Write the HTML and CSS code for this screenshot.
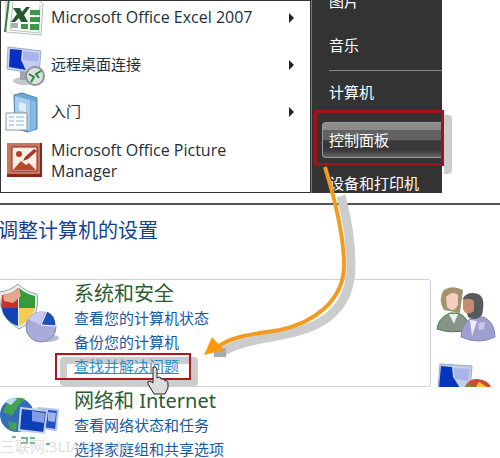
FILE: index.html
```
<!DOCTYPE html>
<html lang="zh-CN">
<head>
    <meta charset="UTF-8">
    <meta name="viewport" content="width=device-width, initial-scale=1.0">
    <title>控制面板</title>
    <link rel="stylesheet" href="styles.css">
</head>
<body>
    <div class="start-menu">
        <ul class="programs">
            <li>
                <a href="#" class="program">
                    <svg class="icon" width="44" height="46" viewBox="0 0 44 46">
                        <path d="M5 5 L37 5 L42 9 L40 40 L5 37Z" fill="#fff" stroke="#b4b8bd" />
                        <path d="M8 4 L4 37" fill="none" stroke="#2f7d39" stroke-width="2" />
                        <path d="M12 7 L9 35 L38 38 L39 10" fill="none" stroke="#a9c9ac" />
                        <path d="M29 15h10v5H29zM29 22h10v5H29zM29 29h9v6H29zM20 29h7v5h-7z" fill="#3f9648" />
                        <path d="M10 28h7v5h-7z" fill="#a5b2aa" />
                        <path d="M12 13h7l2 4 4-5h4l-6 8 4 7h-7l-2-4-4 4h-4l6-8z" fill="#25592f" />
                    </svg>
                    <span class="latin">Microsoft Office Excel 2007</span>
                    <i class="arrow"></i>
                </a>
            </li>
            <li>
                <a href="#" class="program">
                    <svg class="icon" width="44" height="46" viewBox="0 0 44 46">
                        <ellipse cx="23" cy="39" rx="11" ry="4" fill="#c4c8cb" />
                        <path d="M19 28h8v10h-8z" fill="#9da5ad" />
                        <path d="M7 5 L40 9 L38 32 L6 27Z" fill="#c9d6ec" stroke="#9eabc6" />
                        <path d="M9 7l12 1-1 10 5 10-17-3z" fill="#092fc0" />
                        <path d="M22 9l16 2-1 9-15-2z" fill="#a9b4ec" />
                        <path d="M22 18l15 2-1 8-12-1z" fill="#c3cdf2" />
                        <circle cx="34" cy="34" r="9" fill="#dfe1e1" stroke="#8f9396" stroke-width="2" />
                        <path d="M28 32l5 3-3 5M40 29l-5 3 3 4" fill="none" stroke="#28883b" stroke-width="2" />
                    </svg>
                    <span>远程桌面连接</span>
                    <i class="arrow"></i>
                </a>
            </li>
            <li>
                <a href="#" class="program">
                    <svg class="icon" width="44" height="46" viewBox="0 0 44 46">
                        <path d="M13 6l8-2 15 5v31l-10 3-12-4z" fill="#6da9d6" stroke="#4a83ac" />
                        <path d="M14 7l15 4v31l-15-4z" fill="#a9cdea" />
                        <path d="M30 11l5 2v26l-5 3z" fill="#87bbe0" />
                        <path d="M18 13l7 2v8l-7-2z" fill="#e0effa" />
                        <path d="M5 24h21v17H5z" fill="#f8fbfd" stroke="#8a9aa5" />
                        <path d="M8 28h5M8 32h5M8 36h5M15 28h8M15 32h8M15 36h8" stroke="#92b4d5" />
                    </svg>
                    <span>入门</span>
                    <i class="arrow"></i>
                </a>
            </li>
            <li>
                <a href="#" class="program">
                    <svg class="icon" width="44" height="46" viewBox="0 0 44 46">
                        <path d="M6 5h35v34H6z" fill="#8c2519" />
                        <path d="M6 5h33v31H6z" fill="#c8775f" />
                        <path d="M11 9h25v24H11z" fill="#fcede5" stroke="#8c2519" />
                        <circle cx="18" cy="16" r="3" fill="#ae3f24" />
                        <path d="M24 19l9-8 3 2-9 8-5 2z" fill="#a63821" />
                        <path d="M12 32l8-9 5 4 3-2 7 7z" fill="#b9472b" />
                    </svg>
                    <span class="latin">Microsoft Office Picture Manager</span>
                </a>
            </li>
        </ul>
        <div class="places">
            <a href="#" class="place">图片</a>
            <a href="#" class="place">音乐</a>
            <hr>
            <a href="#" class="place">计算机</a>
            <a href="#" class="place active">控制面板</a>
            <a href="#" class="place">设备和打印机</a>
        </div>
    </div>

    <div class="panel">
        <h1>调整计算机的设置</h1>
        <div class="columns">
            <div class="categories">
                <div class="category boxed">
                    <svg class="category-icon" width="64" height="66" viewBox="0 0 64 66">
                        <path d="M-1 10Q10 9 18 2Q26 10 37 12Q41 36 19 47Q-1 36-1 10Z" fill="#e8ecea" stroke="#95a29f" />
                        <path d="M2 13Q12 12 18 6V26H1Z" fill="#c9302a" />
                        <path d="M19 6Q26 12 35 14V26H19Z" fill="#359b3b" />
                        <path d="M2 26H18V44Q3 38 2 26Z" fill="#1144b5" />
                        <path d="M19 26H35Q32 38 19 44Z" fill="#f6cb55" />
                        <path d="M3 13Q13 11 19 6L21 14L13 21L4 19Z" fill="#e5a78e" />
                        <ellipse cx="46" cy="56" rx="13" ry="4" fill="#bbc0c8" />
                        <circle cx="41" cy="45" r="15" fill="#a9acd9" stroke="#7d89b8" />
                        <path d="M41 43L47 29Q56 33 56 44Z" fill="#1e51b9" stroke="#fff" />
                        <path d="M40 43L28 37Q34 29 45 29Z" fill="#c8caf0" />
                    </svg>
                    <div class="category-text">
                        <h2>系统和安全</h2>
                        <a href="#">查看您的计算机状态</a>
                        <a href="#">备份您的计算机</a>
                        <a href="#" class="marked">查找并解决问题</a>
                    </div>
                </div>
                <div class="category">
                    <svg class="category-icon" width="64" height="64" viewBox="0 0 64 64">
                        <circle cx="17" cy="26" r="17" fill="#326db6" />
                        <path d="M7 14q9-8 18-4l-7 7-6 10-9-4zM8 32l9 2-1 8-6-2z" fill="#43a153" />
                        <path d="M5 13q5-6 12-3l-6 6z" fill="#b9dcf0" />
                        <path d="M38 19l20 2-2 20-20-3z" fill="#1e53c3" stroke="#b9c6e2" stroke-width="2" />
                        <path d="M48 23l8 1-1 9-7-1z" fill="#9fb2ea" />
                        <path d="M21 19l26 3-3 22-25-3z" fill="#0b3fb7" stroke="#c3cde7" stroke-width="2" />
                        <path d="M32 22l13 2-1 10-12-2z" fill="#839ce5" />
                        <path d="M12 48h4M21 49h6v5h-6M30 49h5M30 54h5M46 55h4" fill="none" stroke="#71b489" stroke-width="2" />
                    </svg>
                    <div class="category-text">
                        <h2>网络和 Internet</h2>
                        <a href="#">查看网络状态和任务</a>
                        <a href="#">选择家庭组和共享选项</a>
                    </div>
                </div>
            </div>
            <div class="side-icons">
                <svg width="64" height="60" viewBox="0 0 64 60">
                    <path d="M1 43Q2 32 14 27H22Q33 31 33 44Q15 48 1 43Z" fill="#889389" stroke="#378345" />
                    <path d="M8 24Q2 15 7 5Q15-2 27 4L24 27Z" fill="#a3926c" />
                    <path d="M10 11Q17 4 22 9V19Q17 28 11 21Z" fill="#f3cfc0" />
                    <path d="M13 28l5 10 4-10z" fill="#eee" />
                    <path d="M25 51Q25 36 38 31H48Q59 37 59 51Q43 59 25 51Z" fill="#9d9fd0" stroke="#8585b3" />
                    <path d="M27 12Q32 5 42 8Q50 11 46 29Q40 36 32 31Z" fill="#555a5c" />
                    <path d="M27 14Q33 11 38 15L38 25Q30 31 27 23Z" fill="#c58d70" />
                    <path d="M34 34l2 16 5-15z" fill="#eef" />
                    <path d="M42 37l7-1-1 7-5 1z" fill="#c3c8ee" />
                </svg>
                <svg width="64" height="24" viewBox="0 0 64 24">
                    <path d="M4 1l32 2-2 23H2z" fill="#c4cfe6" stroke="#9ba8c4" />
                    <path d="M5 3l11 1 1 10 7 11H3z" fill="#0534bd" />
                    <path d="M18 5l16 1-2 12-13-2z" fill="#a9b4ec" />
                    <path d="M29 24Q33 15 42 16Q52 17 55 24Z" fill="#cf4b32" />
                    <path d="M40 24l3-5 8 5z" fill="#ecc345" />
                    <path d="M30 24l2-3 7 3z" fill="#4c9a51" />
                </svg>
            </div>
        </div>
    </div>

    <svg class="pointer-arrow" width="170" height="210" viewBox="0 0 170 210">
        <path d="M141 36C148 62 151 82 151 105C151 155 115 169 82 175C50 181 32 184 20 194" fill="none" stroke="#ccc" stroke-width="9" />
        <path d="M14 188h12v9H14z" fill="#aaa" />
        <path d="M125 7C136 43 144 78 144 105C144 142 112 163 80 170C52 174 28 177 17 188" fill="none" stroke="#f39b1f" stroke-width="4" />
        <path d="M4 195L12 177L24 190Z" fill="#ff970f" />
    </svg>

    <svg class="hand" width="22" height="30" viewBox="0 0 22 30">
        <path d="M6 1q3-1 4 2v9l2-1q2 0 2 2 4-1 4 2 3-1 3 3v4l-3 6H7L1 18q-1-3 2-3l3 2z" fill="#ddd" stroke="#222" />
    </svg>
    <div class="watermark">三联网.3LIAN.COM</div>
</body>
</html>
```

FILE: styles.css
```
* {
    box-sizing: border-box;
}

body {
    margin: 0;
    height: 100vh;
    overflow: hidden;
    position: relative;
    background-color: #fff;
    font-family: "Noto Sans", "Noto Sans CJK SC", sans-serif;
    font-size: 15px;
}

a {
    color: inherit;
    text-decoration: none;
}

/* Start menu */
.start-menu {
    display: flex;
    height: 193px;
    margin-right: 58px;
    background-color: #333;
}

.programs {
    flex: 1;
    margin: 1px 0 1px 1px;
    padding: 0;
    list-style: none;
    overflow: hidden;
    background-color: #fff;
    color: #1c2f3c;
}

.program {
    display: flex;
    align-items: center;
    height: 47px;
    padding-right: 16px;
    line-height: 21px;
}

.programs li:first-child {
    margin-top: -7px;
}

.programs li:last-child {
    padding-top: 2px;
}

.program span {
    flex: 1;
    max-width: 210px;
}

.program .latin {
    font-family: "Open Sans", "Noto Sans", sans-serif;
    font-size: 16px;
}

.icon {
    margin-right: 6px;
    flex-shrink: 0;
}

.arrow {
    margin-left: auto;
    border: 5px solid transparent;
    border-left: 5px solid #222;
    border-right: 0;
}

.places {
    width: 131px;
    margin-left: 1px;
    padding-left: 17px;
    border-left: 1px solid #777;
    color: #fff;
}

.place {
    display: block;
    height: 44px;
    line-height: 42px;
}

.place:first-child {
    margin-top: -20px;
}

.places hr {
    height: 1px;
    margin: 2px 0 0;
    border: 0;
    background-color: #888;
}

.active {
    position: relative;
    z-index: 1;
    height: 36px;
    margin: 7px 0 4px -7px;
    padding-left: 6px;
    line-height: 34px;
    border: 1px solid #999;
    border-right: 0;
    border-radius: 4px 0 0 4px;
    background: linear-gradient(#8b8b8b 0 20%, #626262 22% 50%, #383838 52% 80%, #666);
}

/* red callout frame with its offset shadow */
.active::before,
.active::after,
.marked::before,
.marked::after {
    content: "";
    position: absolute;
}

.active::after {
    inset: -13px -2px -9px -9px;
    border: 3px solid #a01319;
}

.active::before {
    top: -8px;
    bottom: -17px;
    right: -10px;
    width: 8px;
    border-radius: 0 4px 4px 0;
    background-color: #ccc;
}

/* Control panel */
.panel {
    margin-top: 10px;
    border-top: 2px solid #555;
}

h1 {
    margin: 10px 0 33px -2px;
    font-size: 20px;
    line-height: 31px;
    font-weight: normal;
    color: #123f91;
}

.columns {
    display: flex;
}

.categories {
    flex: 1;
}

.category {
    display: flex;
    padding-top: 1px;
    border-top: 1px solid transparent;
}

.boxed {
    height: 108px;
    padding-top: 2px;
    border: 1px solid #ccd3df;
    border-left: 0;
    border-radius: 0 3px 3px 0;
}

.category-icon {
    margin-right: 10px;
}

.category-text {
    display: flex;
    flex-direction: column;
    align-items: flex-start;
    line-height: 24px;
    color: #1458a8;
}

h2 {
    margin: 0;
    font-size: 20px;
    line-height: 24px;
    font-weight: normal;
    color: #2b5c33;
}

.marked {
    position: relative;
    color: #2f8cc8;
    text-decoration: underline;
}

.marked::before {
    inset: 3px -19px -8px -14px;
    border: 7px solid #ccc;
    border-radius: 4px;
    z-index: -1;
}

.marked::after {
    inset: -1px -12px -2px -19px;
    border: 2px solid #b0171b;
}

.side-icons {
    display: flex;
    flex-direction: column;
    gap: 17px;
    width: 69px;
    padding: 7px 0 0 5px;
}

/* Overlays */
.pointer-arrow {
    position: absolute;
    top: 160px;
    left: 200px;
    z-index: 2;
}

.hand {
    position: absolute;
    top: 366px;
    left: 147px;
    z-index: 2;
}

.watermark {
    position: absolute;
    top: 434px;
    left: 0;
    line-height: 24px;
    color: rgba(200, 200, 200, 0.6);
}
```
